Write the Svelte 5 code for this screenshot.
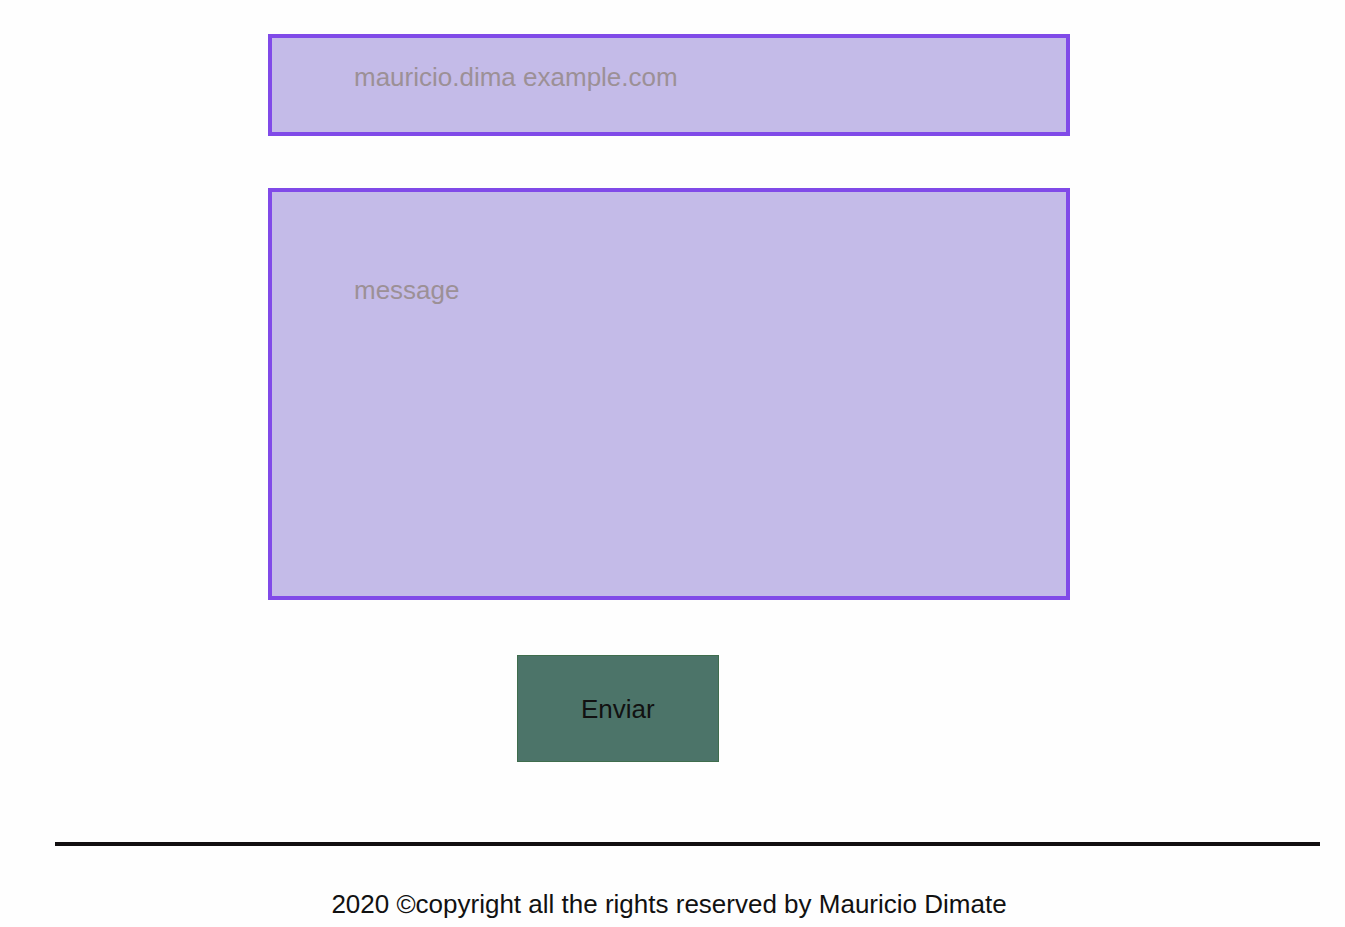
<script>
  let email = $state('');
  let message = $state('');

  function submit(event) {
    event.preventDefault();
  }
</script>

<main>
  <form onsubmit={submit}>
    <input
      class="field email"
      type="email"
      name="email"
      aria-label="Email"
      placeholder="mauricio.dima example.com"
      bind:value={email}
    />
    <textarea
      class="field message"
      name="message"
      aria-label="Message"
      placeholder="message"
      bind:value={message}
    ></textarea>
    <button type="submit">Enviar</button>
  </form>
</main>

<footer>
  <hr />
  <p>2020 ©copyright all the rights reserved by Mauricio Dimate</p>
</footer>

<style>
  :global(body) {
    margin: 0;
    background: #fefefe;
    color: #111;
    font: 26px/30px "Liberation Sans", Arial, sans-serif;
  }

  form {
    display: flex;
    flex-direction: column;
    align-items: flex-start;
    margin: 0 275px 0 268px;
    padding-top: 34px;
  }

  .field {
    box-sizing: border-box;
    display: block;
    width: 100%;
    margin: 0;
    border: 4px solid #804ae8;
    border-radius: 0;
    background: #c4bbe8;
    color: #111;
    font: inherit;
    outline: none;
    resize: none;
  }

  .field::placeholder {
    color: #9c9096;
    opacity: 1;
  }

  .field:focus-visible {
    border-color: #5a22c8;
  }

  .email {
    height: 102px;
    padding: 24px 82px 40px;
  }

  .message {
    height: 412px;
    margin-top: 52px;
    padding: 83px 82px 40px;
  }

  button {
    margin: 55px 0 0 249px;
    padding: 38px 63px 37px;
    border: 1px solid #3f6d4d;
    border-radius: 0;
    background: #4c7469;
    color: #111;
    font: inherit;
    cursor: pointer;
  }

  footer {
    margin-top: 80px;
  }

  hr {
    height: 4px;
    margin: 0 25px 0 55px;
    border: 0;
    background: #110e10;
  }

  p {
    margin: 43px 275px 0 268px;
    text-align: center;
  }
</style>
